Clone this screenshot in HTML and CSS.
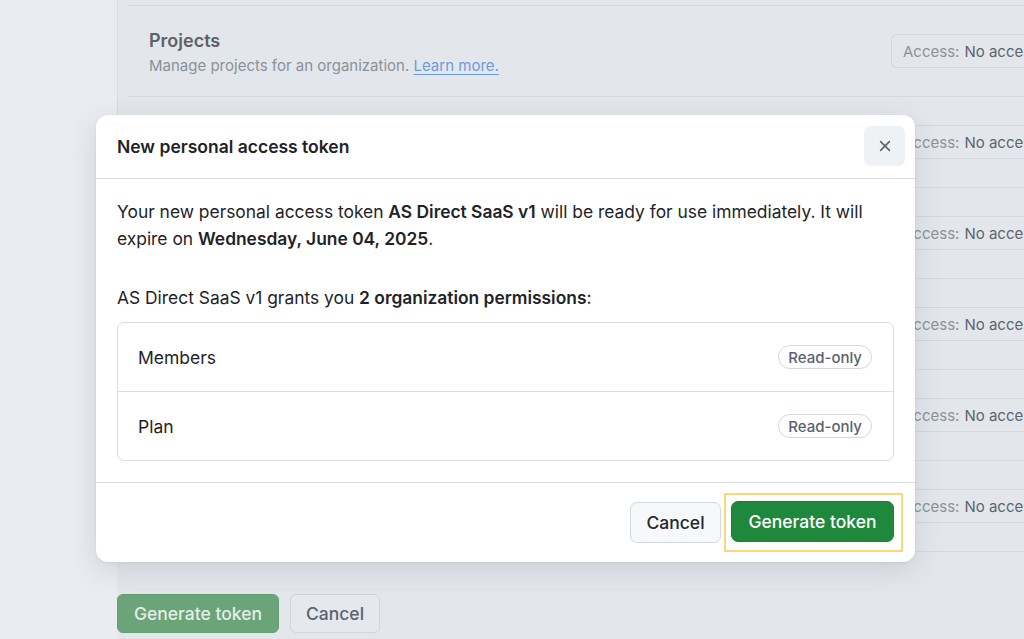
FILE: index.html
```html
<!DOCTYPE html>
<html lang="en">
<head>
<meta charset="utf-8">
<title>New personal access token</title>
<link rel="stylesheet" href="styles.css">
</head>
<body>
<div class="page">
  <aside class="sidebar"></aside>
  <main class="main">
    <div class="list">
      <div class="row row-top"></div>
      <div class="row">
        <div class="row-text">
          <div class="row-title">Projects</div>
          <div class="row-desc">Manage projects for an organization. <a class="link" href="#">Learn more.</a></div>
        </div>
        <div class="access"><span class="access-label">Access:</span> No access</div>
      </div>
      <div class="row"><div class="row-text"></div><div class="access"><span class="access-label">Access:</span> No access</div></div>
      <div class="row"><div class="row-text"></div><div class="access"><span class="access-label">Access:</span> No access</div></div>
      <div class="row"><div class="row-text"></div><div class="access"><span class="access-label">Access:</span> No access</div></div>
      <div class="row"><div class="row-text"></div><div class="access"><span class="access-label">Access:</span> No access</div></div>
      <div class="row"><div class="row-text"></div><div class="access"><span class="access-label">Access:</span> No access</div></div>
    </div>
    <div class="page-actions">
      <button class="pbtn pbtn-primary">Generate token</button>
      <button class="pbtn pbtn-default">Cancel</button>
    </div>
  </main>
</div>

<div class="dialog" role="dialog">
  <div class="dialog-header">
    <h1 class="dialog-title">New personal access token</h1>
    <button class="close-btn" aria-label="Close">
      <svg width="16" height="16" viewBox="0 0 16 16"><path d="M3.6 3.6 12.4 12.4M12.4 3.6 3.6 12.4" stroke="#59636e" stroke-width="1.6" stroke-linecap="round" fill="none"/></svg>
    </button>
  </div>
  <div class="dialog-body">
    <p class="para">Your new personal access token <strong>AS Direct SaaS v1</strong> will be ready for use immediately. It will expire on <strong>Wednesday, June 04, 2025</strong>.</p>
    <p class="para para-grants">AS Direct SaaS v1 grants you <strong>2 organization permissions</strong>:</p>
    <div class="perm-box">
      <div class="perm-row"><span>Members</span><span class="badge">Read-only</span></div>
      <div class="perm-row"><span>Plan</span><span class="badge">Read-only</span></div>
    </div>
  </div>
  <div class="dialog-footer">
    <button class="btn btn-default">Cancel</button>
    <div class="highlight"><button class="btn btn-primary">Generate token</button></div>
  </div>
</div>
</body>
</html>
```
FILE: styles.css
```css
* { box-sizing: border-box; }
html, body { margin: 0; padding: 0; }
body {
  width: 1024px;
  height: 639px;
  overflow: hidden;
  background: #e9ecf0;
  font-family: Inter, "Liberation Sans", Arial, sans-serif;
  color: #1f2328;
  position: relative;
}
.page {
  display: flex;
  height: 639px;
}
.sidebar {
  width: 117px;
  flex: none;
  background: #e9ecf0;
}
.main {
  flex: 1;
  background: #e3e7ec;
  display: flex;
  flex-direction: column;
}
.list {
  border-left: 1px solid #d7dce2;
  height: 552px;
  padding-left: 10px;
}
.row {
  height: 91px;
  border-bottom: 1px solid #d5dae1;
  display: flex;
  align-items: center;
  justify-content: space-between;
  padding-left: 21px;
}
.row-top { height: 6px; }
.row-text { display: flex; flex-direction: column; gap: 5px; padding-top: 3px; }
.row-title {
  font-size: 18px;
  font-weight: 600;
  color: #5d6168;
}
.row-desc {
  font-size: 15px;
  color: #8b9199;
}
.link {
  color: #6b9be0;
  text-decoration: underline;
  text-underline-offset: 3px;
}
.access {
  width: 150px;
  height: 34px;
  margin-right: -17px;
  border: 1px solid #d2d7de;
  border-right: none;
  border-radius: 6px 0 0 6px;
  display: flex;
  align-items: center;
  padding-left: 11px;
  font-size: 15px;
  color: #5e646c;
  white-space: nowrap;
  overflow: hidden;
}
.access-label { color: #8c929a; margin-right: 5px; }
.page-actions {
  display: flex;
  gap: 11px;
  padding-top: 42px;
}
.pbtn {
  height: 39px;
  border-radius: 6px;
  font-family: inherit;
  font-size: 17.5px;
  font-weight: 500;
  padding: 0 12px;
}
.pbtn-primary {
  width: 162px;
  background: #6ba479;
  border: 1px solid #65a074;
  color: #e4eee7;
}
.pbtn-default {
  width: 90px;
  background: #e5e9ee;
  border: 1px solid #cfd5dc;
  color: #5c636b;
}

/* dialog */
.dialog {
  position: absolute;
  left: 96px;
  top: 115px;
  width: 819px;
  height: 447px;
  background: #ffffff;
  border-radius: 12px;
  box-shadow: 0 8px 28px rgba(60, 70, 85, 0.14), 0 1px 3px rgba(60, 70, 85, 0.08);
  display: flex;
  flex-direction: column;
}
.dialog-header {
  height: 64px;
  border-bottom: 1px solid #d8dee4;
  display: flex;
  align-items: center;
  justify-content: space-between;
  padding: 0 10px 0 21px;
}
.dialog-title {
  margin: 0;
  font-size: 17.5px;
  font-weight: 600;
  color: #1f2328;
}
.close-btn {
  width: 41px;
  height: 40px;
  margin-top: -2px;
  border: none;
  border-radius: 7px;
  background: #eff2f5;
  display: flex;
  align-items: center;
  justify-content: center;
  padding: 0;
}
.dialog-body {
  padding: 19px 21px 21px 21px;
  border-bottom: 1px solid #d8dee4;
}
.para {
  margin: 0;
  font-size: 17.4px;
  line-height: 27px;
  color: #1f2328;
}
.para strong { font-weight: 600; }
.para-grants { margin-top: 32px; }
.perm-box {
  margin-top: 11px;
  border: 1px solid #d8dee4;
  border-radius: 7px;
}
.perm-row {
  height: 68px;
  display: flex;
  align-items: center;
  justify-content: space-between;
  padding: 0 21px 0 20px;
  font-size: 17.5px;
  color: #1f2328;
}
.perm-row + .perm-row {
  border-top: 1px solid #d8dee4;
  height: 69px;
}
.badge {
  height: 24px;
  display: inline-flex;
  align-items: center;
  padding: 0 9px;
  border: 1px solid #d1d9e0;
  border-radius: 999px;
  font-size: 15px;
  font-weight: 500;
  color: #59636e;
}
.dialog-footer {
  flex: 1;
  display: flex;
  align-items: center;
  justify-content: flex-end;
  gap: 10px;
  padding: 0 21px;
}
.btn {
  height: 41px;
  border-radius: 7px;
  font-family: inherit;
  font-size: 17.5px;
  font-weight: 500;
  padding: 0 12px;
}
.btn-default {
  width: 91px;
  background: #f6f8fa;
  border: 1px solid #d1d9e0;
  color: #25292e;
}
.btn-primary {
  width: 163px;
  background: #1f883d;
  border: 1px solid #1c7f38;
  color: #ffffff;
  display: block;
}
.highlight {
  border: 2px solid #fcd67b;
  padding: 6px 7px 8px 5px;
  margin: 0 -9px 0 -7px;
}
```
